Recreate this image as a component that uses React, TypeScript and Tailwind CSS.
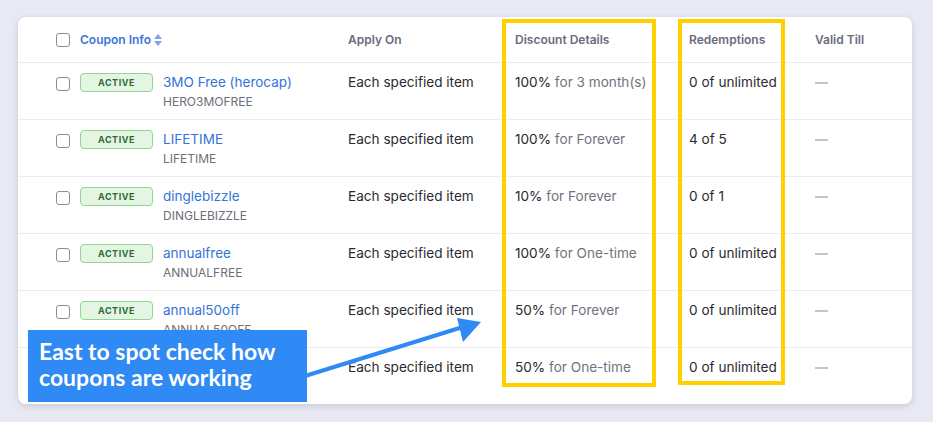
type Coupon = {
  name: string;
  code: string;
  pct: string;
  term: string;
  redemptions: string;
};

const coupons: Coupon[] = [
  { name: "3MO Free (herocap)", code: "HERO3MOFREE", pct: "100%", term: "for 3 month(s)", redemptions: "0 of unlimited" },
  { name: "LIFETIME", code: "LIFETIME", pct: "100%", term: "for Forever", redemptions: "4 of 5" },
  { name: "dinglebizzle", code: "DINGLEBIZZLE", pct: "10%", term: "for Forever", redemptions: "0 of 1" },
  { name: "annualfree", code: "ANNUALFREE", pct: "100%", term: "for One-time", redemptions: "0 of unlimited" },
  { name: "annual50off", code: "ANNUAL50OFF", pct: "50%", term: "for Forever", redemptions: "0 of unlimited" },
  { name: "annual50off1x", code: "ANNUAL50OFF1X", pct: "50%", term: "for One-time", redemptions: "0 of unlimited" },
];

const cols = "grid grid-cols-[24px_268px_167px_174px_126px_1fr] pl-[38px]";

function Checkbox() {
  return <span className="block w-[14px] h-[14px] rounded-[3px] border-[1.5px] border-[#8c8c94] bg-white" />;
}

function SortIcon() {
  return (
    <svg width="10" height="14" viewBox="0 0 10 14" className="ml-[2px]" aria-hidden="true">
      <path d="M5 1 L9 6 L1 6 Z" fill="#7ea3e8" />
      <path d="M5 13 L9 8 L1 8 Z" fill="#7ea3e8" />
    </svg>
  );
}

export default function App() {
  return (
    <div className="w-[933px] h-[422px] bg-[#e9e9f3] pt-[17px] pl-[18px] relative font-['Inter',sans-serif]">
      <div className="w-[894px] h-[387px] bg-white rounded-lg shadow-[0_2px_6px_rgba(60,60,100,0.18)] overflow-hidden">
        {/* header */}
        <div className={`${cols} h-[46px] items-center border-b border-[#ececf0] text-[12px] font-semibold text-[#6b6b7d]`}>
          <Checkbox />
          <div className="flex items-center text-[#3b76d6]">
            Coupon Info
            <SortIcon />
          </div>
          <div>Apply On</div>
          <div>Discount Details</div>
          <div>Redemptions</div>
          <div>Valid Till</div>
        </div>

        {coupons.map((c, i) => (
          <div
            key={c.code}
            className={`${cols} h-[57px] pt-[10px] text-[13.6px] text-[#2a2a30] ${i < coupons.length - 1 ? "border-b border-[#ececf0]" : ""}`}
          >
            <div className="pt-[4px]">
              <Checkbox />
            </div>
            <div className="flex items-start">
              <span className="w-[73px] h-[19px] mr-[10px] rounded-[4px] border border-[#8fd88f] bg-[#e4f5e4] text-[#2e6b34] text-[9px] font-bold tracking-[0.06em] flex items-center justify-center">
                ACTIVE
              </span>
              <div className="flex flex-col leading-[19px]">
                <span className="text-[#3474d8] text-[13.5px]">{c.name}</span>
                <span className="text-[#6e6e78] text-[12px]">{c.code}</span>
              </div>
            </div>
            <div className="leading-[19px]">Each specified item</div>
            <div className="leading-[19px]">
              {c.pct} <span className="text-[#72727f]">{c.term}</span>
            </div>
            <div className="leading-[19px]">{c.redemptions}</div>
            <div className="pt-[9px]">
              <span className="block w-[13px] h-[1.5px] bg-[#c4c4cc]" />
            </div>
          </div>
        ))}
      </div>

      {/* highlight boxes */}
      <div className="absolute left-[502px] top-[19px] w-[154px] h-[368px] border-4 border-[#ffd000]" />
      <div className="absolute left-[678px] top-[19px] w-[107px] h-[366px] border-4 border-[#ffd000]" />

      {/* arrow */}
      <svg className="absolute left-0 top-0" width="933" height="422" aria-hidden="true">
        <line x1="305" y1="376" x2="466" y2="326" stroke="#2f8af5" strokeWidth="4" />
        <path d="M481 322 L457 318 L463 342 Z" fill="#2f8af5" />
      </svg>

      {/* callout */}
      <div className="absolute left-[28px] top-[330px] w-[279px] h-[72px] bg-[#2f8af5] pl-[11px] pt-[8px] text-white font-['Lato',sans-serif] font-bold text-[23px] leading-[26px]">
        East to spot check how
        <br />
        coupons are working
      </div>
    </div>
  );
}
